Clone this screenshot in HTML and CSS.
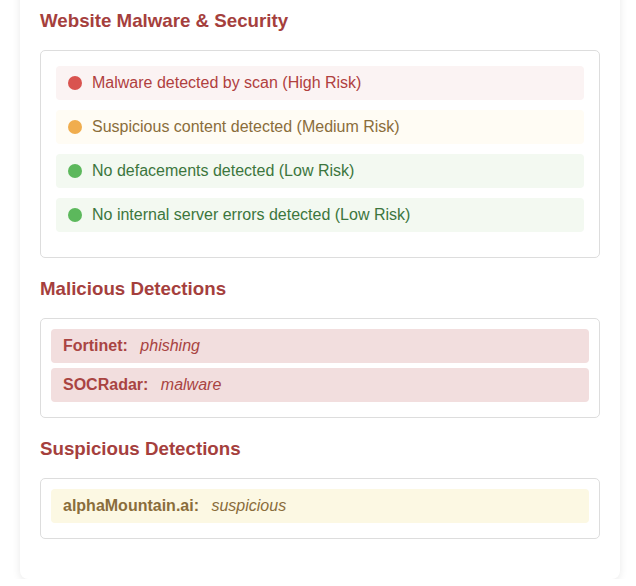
FILE: index.html
```html
<!DOCTYPE html>
<html>
<head>
<meta charset="utf-8">
<link rel="stylesheet" href="styles.css">
</head>
<body>
<div class="page">
  <div class="card">
    <h3 class="section-title">Website Malware &amp; Security</h3>
    <div class="box box-status">
      <div class="status status-high"><span class="dot"></span><span>Malware detected by scan (High Risk)</span></div>
      <div class="status status-medium"><span class="dot"></span><span>Suspicious content detected (Medium Risk)</span></div>
      <div class="status status-low"><span class="dot"></span><span>No defacements detected (Low Risk)</span></div>
      <div class="status status-low"><span class="dot"></span><span>No internal server errors detected (Low Risk)</span></div>
    </div>

    <h3 class="section-title">Malicious Detections</h3>
    <div class="box box-detect">
      <div class="detect detect-malicious"><strong>Fortinet:</strong> <em>phishing</em></div>
      <div class="detect detect-malicious"><strong>SOCRadar:</strong> <em>malware</em></div>
    </div>

    <h3 class="section-title">Suspicious Detections</h3>
    <div class="box box-detect">
      <div class="detect detect-suspicious"><strong>alphaMountain.ai:</strong> <em>suspicious</em></div>
    </div>
  </div>
</div>
</body>
</html>
```

FILE: styles.css
```css
html, body {
  margin: 0;
  padding: 0;
  background: #ffffff;
  font-family: "Liberation Sans", Arial, sans-serif;
  font-size: 16px;
}

.page {
  padding: 0 16px 0 20px;
}

.card {
  width: 560px;
  margin-top: -28px;
  padding: 20px;
  background: #ffffff;
  border-radius: 8px;
  box-shadow: 0 2px 8px rgba(0, 0, 0, 0.09);
}

.section-title {
  margin: 18px 0;
  font-size: 18.72px;
  font-weight: bold;
  color: #a53f3d;
}

.box {
  border: 1px solid #dddddd;
  border-radius: 5px;
  margin-bottom: 20px;
}

.box-status {
  padding: 15px;
}

.box-detect {
  padding: 10px;
}

.status {
  display: flex;
  align-items: center;
  gap: 10px;
  padding: 8px 12px;
  line-height: 18px;
  margin-bottom: 10px;
  border-radius: 4px;
}

.dot {
  width: 14px;
  height: 14px;
  border-radius: 50%;
  flex: none;
}

.status-high {
  background: #fbf3f3;
  color: #b0403e;
}
.status-high .dot { background: #d9534f; }

.status-medium {
  background: #fffcf4;
  color: #8a6d3b;
}
.status-medium .dot { background: #f0ad4e; }

.status-low {
  background: #f3f9f1;
  color: #3c763d;
}
.status-low .dot { background: #5cb85c; }

.detect {
  padding: 8px 12px;
  line-height: 18px;
  margin-bottom: 5px;
  border-radius: 4px;
}

.detect strong {
  margin-right: 8px;
}

.detect-malicious {
  background: #f2dede;
  color: #a94442;
}

.detect-suspicious {
  background: #fcf8e3;
  color: #8a6d3b;
}
```
